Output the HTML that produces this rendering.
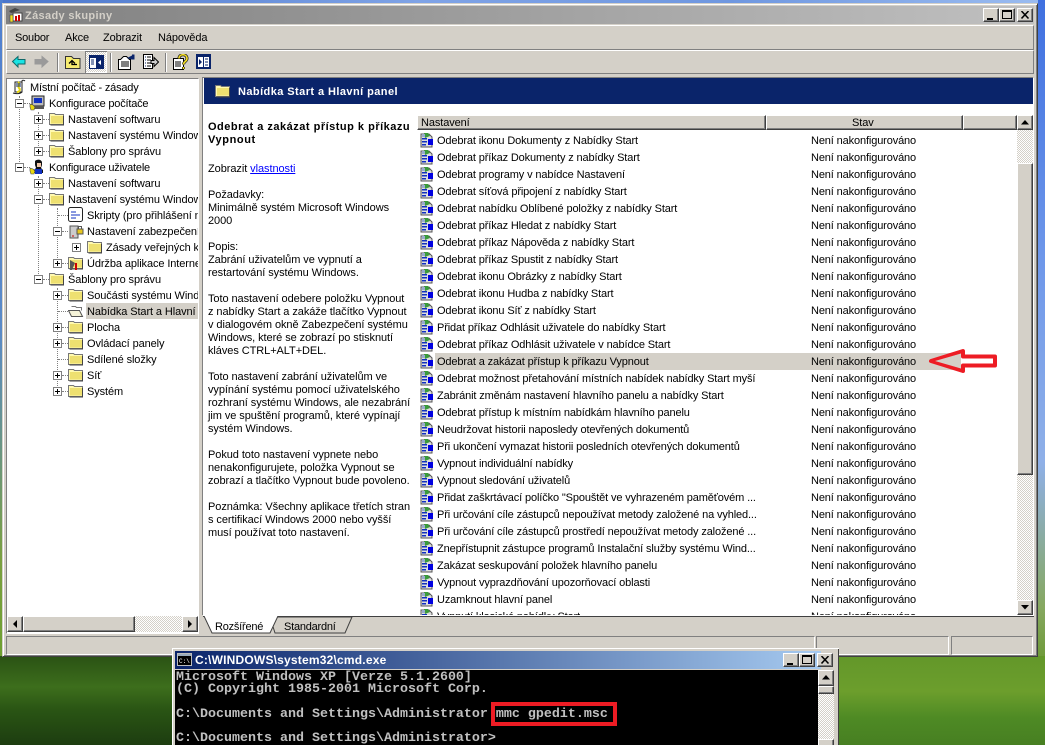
<!DOCTYPE html>
<html><head><meta charset="utf-8">
<style>
html,body{margin:0;padding:0;width:1045px;height:745px;overflow:hidden;background:#2f5a1c}
body{position:relative;font:11px/13px "Liberation Sans",sans-serif;color:#000}
div,span,svg{position:absolute;white-space:nowrap}
.r3d{background:#d4d0c8;box-sizing:border-box;border:1px solid;border-color:#fff #404040 #404040 #fff;box-shadow:inset -1px -1px 0 #808080}
.sunk{box-sizing:border-box;border:1px solid;border-color:#808080 #fff #fff #808080}
.dith{background-color:#fff;background-image:linear-gradient(45deg,#d4d0c8 25%,transparent 25%,transparent 75%,#d4d0c8 75%),linear-gradient(45deg,#d4d0c8 25%,transparent 25%,transparent 75%,#d4d0c8 75%);background-size:2px 2px;background-position:0 0,1px 1px}
.t{line-height:18px;height:16px;letter-spacing:-.1px}
.d{left:208px;line-height:13px;letter-spacing:-.07px;margin-top:1px}
.n{left:437px;line-height:19px;height:17px;letter-spacing:-.13px}
.s{left:811px;line-height:19px;height:17px;letter-spacing:-.13px}
.con{left:176px;color:#c0c0c0;font:bold 13.33px/12px "Liberation Mono",monospace}
.box{width:9px;height:9px;border:1px solid #808080;box-sizing:border-box;background:#fff}
.box i{position:absolute;left:1px;top:3px;width:5px;height:1px;background:#000}
.box b{position:absolute;left:3px;top:1px;width:1px;height:5px;background:#000}
.hl{border-top:1px dotted #808080;height:0}
.vl{border-left:1px dotted #808080;width:0}
</style></head><body>
<svg style="left:0;top:0;width:0;height:0">
<defs>
<g id="pol"><path d="M3 2h8l3 3v10H3z" fill="#ddd" stroke="#555"/><path d="M6 1l4 0 2 3-5 2z" fill="#3a9a3a"/><path d="M4 2l3 0 0 3-3 0z" fill="#9ac"/><rect x="4" y="6" width="5" height="1.5" fill="#1030c0"/><rect x="4" y="9" width="5" height="1.5" fill="#1030c0"/><rect x="4" y="12" width="4" height="1.5" fill="#1030c0"/><rect x="10" y="7" width="5" height="6" fill="#0000e0"/></g>
<g id="fol"><path d="M.5 3.500V2.500h5l1 1h8v10h-14z" fill="#fff9b0" stroke="#777"/><rect x="2" y="5" width="12" height="7.500" fill="#eee070"/><path d="M14.500 5v9h-13" fill="none" stroke="#444"/></g>
</defs></svg>

<!-- desktop -->
<div style="left:0;top:0;width:1045px;height:4px;background:linear-gradient(90deg,#4a76cc,#7fa3e6 40%,#6f97e0 70%,#9bbcf0)"></div>
<div style="left:0;top:0;width:3px;height:660px;background:linear-gradient(180deg,#5080d0,#5a8ac8 50%,#7aa040 85%,#6ea030)"></div>
<div style="left:1038px;top:0;width:7px;height:660px;background:linear-gradient(180deg,#3f70e0,#6f98ea 40%,#8fb0e8 70%,#86a860 92%,#6e9a38)"></div>
<div style="left:0;top:656px;width:1045px;height:89px;background:linear-gradient(180deg,#2a5214,#3d6e1c 35%,#2a5514 60%,#1d3d10)"></div>
<div style="left:838px;top:656px;width:207px;height:89px;background:linear-gradient(180deg,#63972a,#6c9e2c 40%,#4e8a24 70%,#477f22)"></div>

<!-- main window -->
<div style="left:2px;top:3px;width:1036px;height:654px;background:#d4d0c8;border:1px solid;border-color:#d4d0c8 #404040 #404040 #d4d0c8;box-sizing:border-box;box-shadow:inset 1px 1px 0 #fff,inset -1px -1px 0 #808080"></div>
<div style="left:6px;top:6px;width:1028px;height:18px;background:linear-gradient(90deg,#808080,#c0c0c0)"></div>
<svg style="left:8px;top:7px" width="16" height="16"><rect x="5" y="6" width="9" height="8" fill="#fff" stroke="#444"/><rect x="7" y="9" width="2" height="5" fill="#c00"/><rect x="10" y="8" width="2" height="6" fill="#c00"/><rect x="2" y="8" width="3" height="7" fill="#f4e020" stroke="#444" stroke-width=".6"/><path d="M1 4l6-3 5 2-9 3z" fill="#444"/></svg>
<div style="left:25px;top:9px;font-weight:bold;color:#d4d0c8;line-height:14px;letter-spacing:.35px">Zásady skupiny</div>
<div class="r3d" style="left:983px;top:8px;width:16px;height:14px"><div style="left:3px;top:9px;width:6px;height:2px;background:#000"></div></div>
<div class="r3d" style="left:999px;top:8px;width:16px;height:14px"><div style="left:2px;top:1px;width:10px;height:9px;border:1px solid #000;border-top-width:2px;box-sizing:border-box"></div></div>
<div class="r3d" style="left:1017px;top:8px;width:16px;height:14px"><svg style="left:3px;top:2px" width="9" height="8"><path d="M.5 0l7 7.500M7.500 0l-7 7.500" stroke="#000" stroke-width="1.500"/></svg></div>

<!-- menu -->
<div class="sunk" style="left:6px;top:25px;width:1028px;height:25px;border-color:#fff #808080 #808080 #fff"></div>
<div style="left:15px;top:32px;letter-spacing:-.2px">Soubor</div>
<div style="left:65px;top:32px;letter-spacing:-.1px">Akce</div>
<div style="left:103px;top:32px;letter-spacing:-.1px">Zobrazit</div>
<div style="left:158px;top:32px;letter-spacing:-.1px">Nápověda</div>

<!-- toolbar -->
<div class="sunk" style="left:6px;top:50px;width:1028px;height:24px;border-color:#fff #808080 #808080 #fff"></div>
<svg style="left:11px;top:53px" width="50" height="20">
<path d="M1.500 8.500L7 3.500v3h7v4.500H7v3z" fill="#19e4e4" stroke="#106868"/>
<path d="M37 8.500L31 3.500v3h-7v4.500h7v3z" fill="#9a9a9a" stroke="#9a9a9a"/>
<path d="M46.500 0v19" stroke="#808080"/><path d="M47.500 0v19" stroke="#fff"/>
</svg>
<svg style="left:65px;top:54px" width="16" height="16"><path d="M.5 14.500v-12h6l2 2h6.500v10z" fill="#f7ec70" stroke="#333"/><path d="M4 9.500l3-3 3 3M7 7v3.500h5" fill="none" stroke="#000" stroke-width="1.300"/></svg>
<div class="dith" style="left:85px;top:51px;width:22px;height:22px;box-shadow:inset 1px 1px 0 #808080,inset -1px -1px 0 #fff"></div>
<svg style="left:89px;top:55px" width="15" height="14"><rect x=".5" y=".5" width="14" height="13" fill="#fff" stroke="#0a246a"/><rect x="0" y="0" width="15" height="3" fill="#0a246a"/><rect x="7" y="0" width="8" height="14" fill="#0a246a"/><path d="M12 5v5l-3-2.500z" fill="#fff"/><path d="M2 5h3M2 7h3M2 9h3" stroke="#0a246a"/></svg>
<div style="left:110px;top:53px;width:1px;height:19px;background:#808080"></div><div style="left:111px;top:53px;width:1px;height:19px;background:#fff"></div>
<svg style="left:118px;top:54px" width="17" height="16"><path d="M.5 15.500v-10h2l3-3h3l3 3h1v10z" fill="#fff" stroke="#000"/><path d="M3 8h8M3 10h8M3 12h8" stroke="#000"/><path d="M9 4l5-2.500v-1h2.500v5h-3z" fill="#0a246a"/></svg>
<svg style="left:143px;top:54px" width="16" height="16"><path d="M.5.500h9v14h-9z" fill="#fff" stroke="#000"/><path d="M2 3h1M2 6h1M2 9h1M2 12h1" stroke="#0a246a"/><path d="M4 3h4M4 6h4M4 9h4M4 12h4" stroke="#000"/><path d="M8 6.500h3v-3l4.500 4.500-4.500 4.500v-3h-3z" fill="#ccc" stroke="#000"/></svg>
<div style="left:165px;top:53px;width:1px;height:19px;background:#808080"></div><div style="left:166px;top:53px;width:1px;height:19px;background:#fff"></div>
<svg style="left:173px;top:54px" width="16" height="16"><path d="M.5 4.500h10v11h-10z" fill="#fff" stroke="#000"/><path d="M2 8h6M2 10h6M2 12h6" stroke="#000"/><path d="M6 4.500c0-5 8-5 8 0 0 3-3.500 3-3.500 6M10.500 13v2" fill="none" stroke="#222" stroke-width="3"/><path d="M6 4.500c0-5 8-5 8 0 0 3-3.500 3-3.500 6M10.500 13v2" fill="none" stroke="#f7e020" stroke-width="1.600"/></svg>
<svg style="left:196px;top:54px" width="15" height="15"><rect x="0" y="0" width="15" height="15" fill="#0a246a"/><rect x="2" y="3" width="5" height="10" fill="#fff"/><rect x="8" y="3" width="5" height="10" fill="#fff"/><path d="M3 5v6l3-3z" fill="#0a246a"/><path d="M9 5h3M9 8h3M9 11h3" stroke="#0a246a"/></svg>

<!-- left pane -->
<div class="sunk" style="left:6px;top:78px;width:193px;height:556px;background:#fff;border-color:#808080 #fff #fff #808080;overflow:hidden"></div>
<div style="left:7px;top:79px;width:191px;height:537px;overflow:hidden;background:#fff">
<div style="left:0;top:0;width:191px;height:537px;margin:-79px 0 0 -7px">
<div class="vl" style="left:19px;top:96px;height:70px"></div>
<div class="vl" style="left:38px;top:112px;height:38px"></div>
<div class="vl" style="left:38px;top:176px;height:102px"></div>
<div class="vl" style="left:57px;top:208px;height:56px"></div>
<div class="vl" style="left:57px;top:288px;height:104px"></div>
<div class="hl" style="left:24px;top:103px;width:6px"></div>
<div class="hl" style="left:24px;top:167px;width:6px"></div>
<div class="hl" style="left:43px;top:119px;width:6px"></div>
<div class="hl" style="left:43px;top:135px;width:6px"></div>
<div class="hl" style="left:43px;top:151px;width:6px"></div>
<div class="hl" style="left:43px;top:183px;width:6px"></div>
<div class="hl" style="left:43px;top:199px;width:6px"></div>
<div class="hl" style="left:43px;top:279px;width:6px"></div>
<div class="hl" style="left:58px;top:215px;width:10px"></div>
<div class="hl" style="left:62px;top:231px;width:6px"></div>
<div class="hl" style="left:62px;top:263px;width:6px"></div>
<div class="hl" style="left:62px;top:295px;width:6px"></div>
<div class="hl" style="left:58px;top:311px;width:10px"></div>
<div class="hl" style="left:62px;top:327px;width:6px"></div>
<div class="hl" style="left:62px;top:343px;width:6px"></div>
<div class="hl" style="left:58px;top:359px;width:10px"></div>
<div class="hl" style="left:62px;top:375px;width:6px"></div>
<div class="hl" style="left:62px;top:391px;width:6px"></div>

<div class="box" style="left:15px;top:99px"><i></i></div>
<div class="box" style="left:15px;top:163px"><i></i></div>
<div class="box" style="left:34px;top:115px"><i></i><b></b></div>
<div class="box" style="left:34px;top:131px"><i></i><b></b></div>
<div class="box" style="left:34px;top:147px"><i></i><b></b></div>
<div class="box" style="left:34px;top:179px"><i></i><b></b></div>
<div class="box" style="left:34px;top:195px"><i></i></div>
<div class="box" style="left:34px;top:275px"><i></i></div>
<div class="box" style="left:53px;top:227px"><i></i></div>
<div class="box" style="left:53px;top:259px"><i></i><b></b></div>
<div class="box" style="left:53px;top:291px"><i></i><b></b></div>
<div class="box" style="left:53px;top:323px"><i></i><b></b></div>
<div class="box" style="left:53px;top:339px"><i></i><b></b></div>
<div class="box" style="left:53px;top:371px"><i></i><b></b></div>
<div class="box" style="left:53px;top:387px"><i></i><b></b></div>
<div class="box" style="left:72px;top:243px"><i></i><b></b></div>

<svg style="left:11px;top:79px" width="16" height="16"><path d="M2 14c3 1 7 1 9-1V2c0-1 2-1 3 0" fill="#fff" stroke="#222"/><path d="M4 3h7v10H4z" fill="#fff" stroke="#222"/><path d="M7 3c3 2-1 4 1 6s0 4-2 4" fill="none" stroke="#e8d810" stroke-width="2"/><path d="M5 5h5M5 7h5" stroke="#0a246a"/></svg>
<svg style="left:29px;top:95px" width="17" height="16"><rect x="3" y="1" width="12" height="10" fill="#bbb" stroke="#222"/><rect x="5" y="3" width="8" height="5" fill="#1030c0"/><rect x="3" y="11" width="12" height="3" fill="#555"/><path d="M1 9l3 1 2 2-1 3-3 0-1-3z" fill="#e8d810" stroke="#444" stroke-width=".6"/></svg>
<svg style="left:29px;top:159px" width="17" height="16"><path d="M6 2c2-2 6-2 7 1v3l-1 3 2 2v3H5v-3l2-2-1-3z" fill="#111"/><path d="M8 4h4v4H8z" fill="#f2c8a8"/><path d="M6 10h7v5H6z" fill="#1030c0"/><path d="M1 9l3 1 2 2-1 3-3 0-1-3z" fill="#e8d810" stroke="#444" stroke-width=".6"/></svg>
<svg style="left:49px;top:111px" width="16" height="16"><use href="#fol"/></svg>
<svg style="left:49px;top:127px" width="16" height="16"><use href="#fol"/></svg>
<svg style="left:49px;top:143px" width="16" height="16"><use href="#fol"/></svg>
<svg style="left:49px;top:175px" width="16" height="16"><use href="#fol"/></svg>
<svg style="left:49px;top:191px" width="16" height="16"><use href="#fol"/></svg>
<svg style="left:49px;top:271px" width="16" height="16"><use href="#fol"/></svg>
<svg style="left:68px;top:207px" width="16" height="16"><rect x=".5" y=".5" width="14" height="14" rx="2" fill="#fff" stroke="#222"/><path d="M3 5h5M3 8h9M3 11h5" stroke="#1030c0"/></svg>
<svg style="left:68px;top:223px" width="16" height="16"><rect x="2" y="3" width="8" height="12" fill="#ccc" stroke="#555"/><rect x="9" y="6" width="6" height="5" fill="#e8c820" stroke="#555"/><path d="M10.500 6V3.500h3V6" fill="none" stroke="#555"/><path d="M4 13h2" stroke="#c00"/></svg>
<svg style="left:68px;top:255px" width="16" height="16"><use href="#fol"/><path d="M2 5l5 3-3 7h-2z" fill="#555"/><rect x="7" y="8" width="2" height="7" fill="#c00"/></svg>
<svg style="left:87px;top:239px" width="16" height="16"><use href="#fol"/></svg>
<svg style="left:68px;top:287px" width="16" height="16"><use href="#fol"/></svg>
<svg style="left:68px;top:303px" width="16" height="16"><path d="M3.500 3.500h4l1 1h5v3" fill="#fff" stroke="#777"/><path d="M.5 7.500h11l3 6h-11z" fill="#f5f3d8" stroke="#555"/></svg>
<svg style="left:68px;top:319px" width="16" height="16"><use href="#fol"/></svg>
<svg style="left:68px;top:335px" width="16" height="16"><use href="#fol"/></svg>
<svg style="left:68px;top:351px" width="16" height="16"><use href="#fol"/></svg>
<svg style="left:68px;top:367px" width="16" height="16"><use href="#fol"/></svg>
<svg style="left:68px;top:383px" width="16" height="16"><use href="#fol"/></svg>

<div style="left:86px;top:303px;width:120px;height:16px;background:#d4d0c8"></div>

<div class="t" style="left:30px;top:79px;letter-spacing:-.2px">Místní počítač - zásady</div>
<div class="t" style="left:49px;top:95px;letter-spacing:-.2px">Konfigurace počítače</div>
<div class="t" style="left:68px;top:111px">Nastavení softwaru</div>
<div class="t" style="left:68px;top:127px">Nastavení systému Windows</div>
<div class="t" style="left:68px;top:143px">Šablony pro správu</div>
<div class="t" style="left:49px;top:159px;letter-spacing:-.2px">Konfigurace uživatele</div>
<div class="t" style="left:68px;top:175px">Nastavení softwaru</div>
<div class="t" style="left:68px;top:191px">Nastavení systému Windows</div>
<div class="t" style="left:87px;top:207px">Skripty (pro přihlášení nebo</div>
<div class="t" style="left:87px;top:223px">Nastavení zabezpečení</div>
<div class="t" style="left:106px;top:239px">Zásady veřejných klíčů</div>
<div class="t" style="left:87px;top:255px">Údržba aplikace Internet</div>
<div class="t" style="left:68px;top:271px">Šablony pro správu</div>
<div class="t" style="left:87px;top:287px">Součásti systému Windows</div>
<div class="t" style="left:87px;top:303px">Nabídka Start a Hlavní panel</div>
<div class="t" style="left:87px;top:319px">Plocha</div>
<div class="t" style="left:87px;top:335px">Ovládací panely</div>
<div class="t" style="left:87px;top:351px">Sdílené složky</div>
<div class="t" style="left:87px;top:367px">Síť</div>
<div class="t" style="left:87px;top:383px">Systém</div>
</div></div>

<!-- left h scrollbar -->
<div class="dith" style="left:7px;top:616px;width:191px;height:16px"></div>
<div class="r3d" style="left:7px;top:616px;width:16px;height:16px"><svg style="left:4px;top:3px" width="6" height="8"><path d="M5 0v8L1 4z"/></svg></div>
<div class="r3d" style="left:23px;top:616px;width:112px;height:16px"></div>
<div class="r3d" style="left:182px;top:616px;width:16px;height:16px"><svg style="left:5px;top:3px" width="6" height="8"><path d="M0 0v8l4-4z"/></svg></div>

<!-- right pane -->
<div style="left:203px;top:78px;width:831px;height:538px;background:#fff;box-shadow:-1px -1px 0 #808080"></div>
<div style="left:204px;top:78px;width:829px;height:26px;background:#0a246a"></div>
<svg style="left:215px;top:83px" width="16" height="16"><use href="#fol"/></svg>
<div style="left:238px;top:85px;color:#fff;font-weight:bold;line-height:14px;letter-spacing:.43px">Nabídka Start a Hlavní panel</div>

<!-- description -->
<div class="d" style="left:208px;top:120px;font-weight:bold;letter-spacing:.5px;width:208px;overflow:hidden">Odebrat a zakázat přístup k příkazu</div>
<div class="d" style="top:133px;font-weight:bold;letter-spacing:.6px">Vypnout</div>
<div class="d" style="top:162px">Zobrazit <span style="position:static;color:#0000ff;text-decoration:underline">vlastnosti</span></div>
<div class="d" style="top:188px">Požadavky:</div>
<div class="d" style="top:201px">Minimálně systém Microsoft Windows</div>
<div class="d" style="top:214px">2000</div>
<div class="d" style="top:240px">Popis:</div>
<div class="d" style="top:253px">Zabrání uživatelům ve vypnutí a</div>
<div class="d" style="top:266px">restartování systému Windows.</div>
<div class="d" style="top:292px">Toto nastavení odebere položku Vypnout</div>
<div class="d" style="top:305px">z nabídky Start a zakáže tlačítko Vypnout</div>
<div class="d" style="top:318px">v dialogovém okně Zabezpečení systému</div>
<div class="d" style="top:331px">Windows, které se zobrazí po stisknutí</div>
<div class="d" style="top:344px">kláves CTRL+ALT+DEL.</div>
<div class="d" style="top:370px">Toto nastavení zabrání uživatelům ve</div>
<div class="d" style="top:383px">vypínání systému pomocí uživatelského</div>
<div class="d" style="top:396px">rozhraní systému Windows, ale nezabrání</div>
<div class="d" style="top:409px">jim ve spuštění programů, které vypínají</div>
<div class="d" style="top:422px">systém Windows.</div>
<div class="d" style="top:448px">Pokud toto nastavení vypnete nebo</div>
<div class="d" style="top:461px">nenakonfigurujete, položka Vypnout se</div>
<div class="d" style="top:474px">zobrazí a tlačítko Vypnout bude povoleno.</div>
<div class="d" style="top:500px">Poznámka: Všechny aplikace třetích stran</div>
<div class="d" style="top:513px">s certifikací Windows 2000 nebo vyšší</div>
<div class="d" style="top:526px">musí používat toto nastavení.</div>

<!-- list header -->
<div class="r3d" style="left:417px;top:115px;width:349px;height:15px;border-color:#fff #404040 #404040 #fff"></div>
<div class="r3d" style="left:766px;top:115px;width:197px;height:15px"></div>
<div class="r3d" style="left:963px;top:115px;width:54px;height:15px"></div>
<div style="left:421px;top:117px;letter-spacing:-.1px">Nastavení</div>
<div style="left:852px;top:117px;letter-spacing:-.1px">Stav</div>

<!-- highlight -->
<div style="left:435px;top:353px;width:528px;height:17px;background:#d4d0c8"></div>

<!-- list -->
<div style="left:417px;top:130px;width:600px;height:485px;overflow:hidden">
<div style="left:-417px;top:-130px;width:1045px;height:745px">
<svg style="left:418px;top:132px;width:17px;height:493px" viewBox="0 0 17 493">
<use href="#pol" y="0"/><use href="#pol" y="17"/><use href="#pol" y="34"/><use href="#pol" y="51"/><use href="#pol" y="68"/><use href="#pol" y="85"/><use href="#pol" y="102"/><use href="#pol" y="119"/><use href="#pol" y="136"/><use href="#pol" y="153"/><use href="#pol" y="170"/><use href="#pol" y="187"/><use href="#pol" y="204"/><use href="#pol" y="221"/><use href="#pol" y="238"/><use href="#pol" y="255"/><use href="#pol" y="272"/><use href="#pol" y="289"/><use href="#pol" y="306"/><use href="#pol" y="323"/><use href="#pol" y="340"/><use href="#pol" y="357"/><use href="#pol" y="374"/><use href="#pol" y="391"/><use href="#pol" y="408"/><use href="#pol" y="425"/><use href="#pol" y="442"/><use href="#pol" y="459"/><use href="#pol" y="476"/>
</svg>
<div class="n" style="top:132px">Odebrat ikonu Dokumenty z Nabídky Start</div><div class="s" style="top:132px">Není nakonfigurováno</div>
<div class="n" style="top:149px">Odebrat příkaz Dokumenty z nabídky Start</div><div class="s" style="top:149px">Není nakonfigurováno</div>
<div class="n" style="top:166px">Odebrat programy v nabídce Nastavení</div><div class="s" style="top:166px">Není nakonfigurováno</div>
<div class="n" style="top:183px">Odebrat síťová připojení z nabídky Start</div><div class="s" style="top:183px">Není nakonfigurováno</div>
<div class="n" style="top:200px">Odebrat nabídku Oblíbené položky z nabídky Start</div><div class="s" style="top:200px">Není nakonfigurováno</div>
<div class="n" style="top:217px">Odebrat příkaz Hledat z nabídky Start</div><div class="s" style="top:217px">Není nakonfigurováno</div>
<div class="n" style="top:234px">Odebrat příkaz Nápověda z nabídky Start</div><div class="s" style="top:234px">Není nakonfigurováno</div>
<div class="n" style="top:251px">Odebrat příkaz Spustit z nabídky Start</div><div class="s" style="top:251px">Není nakonfigurováno</div>
<div class="n" style="top:268px">Odebrat ikonu Obrázky z nabídky Start</div><div class="s" style="top:268px">Není nakonfigurováno</div>
<div class="n" style="top:285px">Odebrat ikonu Hudba z nabídky Start</div><div class="s" style="top:285px">Není nakonfigurováno</div>
<div class="n" style="top:302px">Odebrat ikonu Síť z nabídky Start</div><div class="s" style="top:302px">Není nakonfigurováno</div>
<div class="n" style="top:319px">Přidat příkaz Odhlásit uživatele do nabídky Start</div><div class="s" style="top:319px">Není nakonfigurováno</div>
<div class="n" style="top:336px">Odebrat příkaz Odhlásit uživatele v nabídce Start</div><div class="s" style="top:336px">Není nakonfigurováno</div>
<div class="n" style="top:353px">Odebrat a zakázat přístup k příkazu Vypnout</div><div class="s" style="top:353px">Není nakonfigurováno</div>
<div class="n" style="top:370px">Odebrat možnost přetahování místních nabídek nabídky Start myší</div><div class="s" style="top:370px">Není nakonfigurováno</div>
<div class="n" style="top:387px">Zabránit změnám nastavení hlavního panelu a nabídky Start</div><div class="s" style="top:387px">Není nakonfigurováno</div>
<div class="n" style="top:404px">Odebrat přístup k místním nabídkám hlavního panelu</div><div class="s" style="top:404px">Není nakonfigurováno</div>
<div class="n" style="top:421px">Neudržovat historii naposledy otevřených dokumentů</div><div class="s" style="top:421px">Není nakonfigurováno</div>
<div class="n" style="top:438px">Při ukončení vymazat historii posledních otevřených dokumentů</div><div class="s" style="top:438px">Není nakonfigurováno</div>
<div class="n" style="top:455px">Vypnout individuální nabídky</div><div class="s" style="top:455px">Není nakonfigurováno</div>
<div class="n" style="top:472px">Vypnout sledování uživatelů</div><div class="s" style="top:472px">Není nakonfigurováno</div>
<div class="n" style="top:489px">Přidat zaškrtávací políčko "Spouštět ve vyhrazeném paměťovém ...</div><div class="s" style="top:489px">Není nakonfigurováno</div>
<div class="n" style="top:506px">Při určování cíle zástupců nepoužívat metody založené na vyhled...</div><div class="s" style="top:506px">Není nakonfigurováno</div>
<div class="n" style="top:523px">Při určování cíle zástupců prostředí nepoužívat metody založené ...</div><div class="s" style="top:523px">Není nakonfigurováno</div>
<div class="n" style="top:540px">Znepřístupnit zástupce programů Instalační služby systému Wind...</div><div class="s" style="top:540px">Není nakonfigurováno</div>
<div class="n" style="top:557px">Zakázat seskupování položek hlavního panelu</div><div class="s" style="top:557px">Není nakonfigurováno</div>
<div class="n" style="top:574px">Vypnout vyprazdňování upozorňovací oblasti</div><div class="s" style="top:574px">Není nakonfigurováno</div>
<div class="n" style="top:591px">Uzamknout hlavní panel</div><div class="s" style="top:591px">Není nakonfigurováno</div>
<div class="n" style="top:608px">Vypnutí klasické nabídky Start</div><div class="s" style="top:608px">Není nakonfigurováno</div>
</div></div>

<!-- list scrollbar -->
<div class="dith" style="left:1017px;top:130px;width:16px;height:470px"></div>
<div class="r3d" style="left:1017px;top:115px;width:16px;height:15px"><svg style="left:3px;top:4px" width="8" height="5"><path d="M4 0l4 4.500H0z"/></svg></div>
<div class="r3d" style="left:1017px;top:163px;width:16px;height:312px"></div>
<div class="r3d" style="left:1017px;top:600px;width:16px;height:15px"><svg style="left:3px;top:4px" width="8" height="5"><path d="M0 0h8L4 4.500z"/></svg></div>

<!-- tabs -->
<div style="left:203px;top:616px;width:831px;height:1px;background:#404040"></div>
<svg style="left:203px;top:616px" width="160" height="20"><path d="M67 1h82l-7 16H72z" fill="#d4d0c8" stroke="#404040"/><path d="M1 0l8 17h58l8-17z" fill="#fff"/><path d="M1 0l8 17h58l8-17" fill="none" stroke="#404040"/></svg>
<div style="left:215px;top:621px;letter-spacing:-.02em">Rozšířené</div>
<div style="left:284px;top:621px;letter-spacing:-.02em">Standardní</div>

<!-- status -->
<div class="sunk" style="left:6px;top:636px;width:809px;height:19px"></div>
<div class="sunk" style="left:816px;top:636px;width:133px;height:19px"></div>
<div class="sunk" style="left:951px;top:636px;width:82px;height:19px"></div>

<!-- arrow -->
<svg style="left:925px;top:345px" width="76" height="32"><path d="M6 16L38 6V11.500H70V20.500H38V26z" fill="#fff" stroke="#ed1c24" stroke-width="4" stroke-linejoin="round"/><path d="M10 16L36 8.500V23.500z" fill="#d4d0c8"/></svg>

<!-- cmd window -->
<div style="left:172px;top:648px;width:667px;height:97px;background:#d4d0c8;box-shadow:inset 1px 1px 0 #fff,inset -1px 0 0 #404040"></div>
<div style="left:175px;top:651px;width:646px;height:18px;background:linear-gradient(90deg,#0a246a,#a6caf0)"></div>
<svg style="left:177px;top:652px" width="16" height="16"><rect x=".5" y="1.500" width="14" height="12" fill="#000" stroke="#bbb"/><rect x="1" y="2" width="13" height="2" fill="#9ab"/><text x="2" y="11" fill="#fff" font-size="6" font-family="Liberation Mono,monospace">C:\</text></svg>
<div style="left:195px;top:653px;color:#fff;font:bold 12px/14px 'Liberation Sans',sans-serif;letter-spacing:.2px">C:\WINDOWS\system32\cmd.exe</div>
<div class="r3d" style="left:783px;top:653px;width:16px;height:14px"><div style="left:3px;top:9px;width:6px;height:2px;background:#000"></div></div>
<div class="r3d" style="left:799px;top:653px;width:16px;height:14px"><div style="left:2px;top:1px;width:10px;height:9px;border:1px solid #000;border-top-width:2px;box-sizing:border-box"></div></div>
<div class="r3d" style="left:817px;top:653px;width:16px;height:14px"><svg style="left:3px;top:2px" width="9" height="8"><path d="M.5 0l7 7.500M7.500 0l-7 7.500" stroke="#000" stroke-width="1.500"/></svg></div>
<div style="left:175px;top:670px;width:643px;height:75px;background:#000"></div>
<div class="con" style="top:672px">Microsoft Windows XP [Verze 5.1.2600]</div>
<div class="con" style="top:684px">(C) Copyright 1985-2001 Microsoft Corp.</div>
<div class="con" style="top:709px">C:\Documents and Settings\Administrator mmc gpedit.msc</div>
<div class="con" style="top:733px">C:\Documents and Settings\Administrator&gt;</div>
<div style="left:491px;top:702px;width:126px;height:24px;box-sizing:border-box;border:4px solid #ed1c24"></div>
<div class="dith" style="left:818px;top:670px;width:16px;height:75px"></div>
<div class="r3d" style="left:818px;top:670px;width:16px;height:16px"><svg style="left:3px;top:4px" width="8" height="5"><path d="M4 0l4 4.500H0z"/></svg></div>
<div class="r3d" style="left:818px;top:686px;width:16px;height:8px"></div>
<div class="r3d" style="left:818px;top:739px;width:16px;height:10px"></div>
</body></html>
